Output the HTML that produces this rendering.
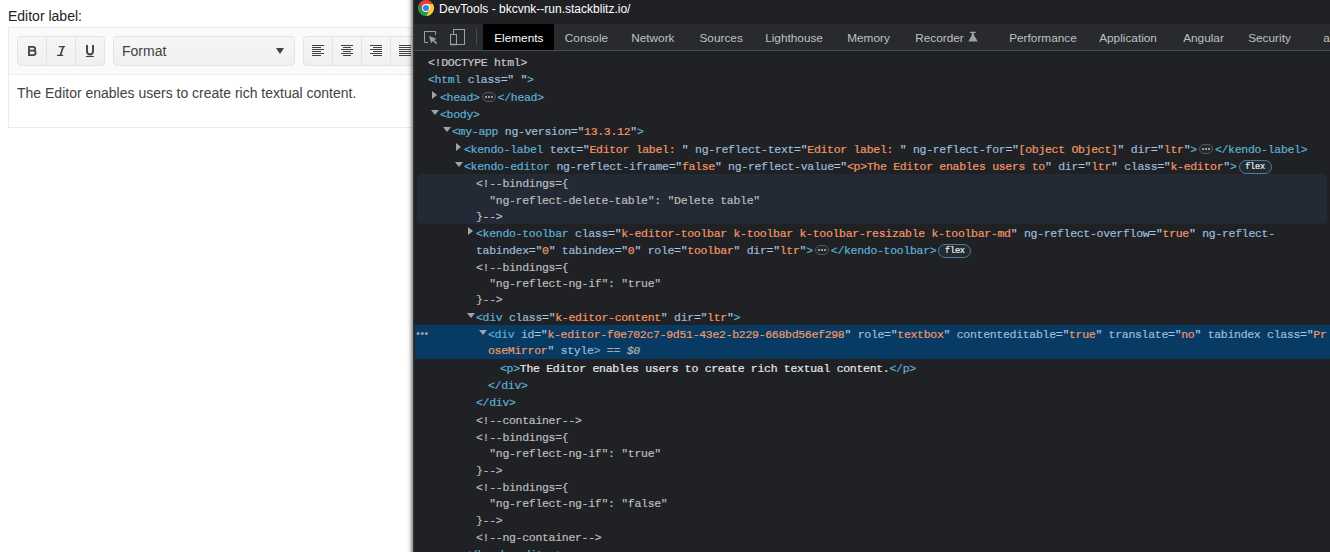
<!DOCTYPE html>
<html><head><meta charset="utf-8">
<style>
*{box-sizing:border-box}
html,body{margin:0;padding:0}
body{width:1330px;height:552px;overflow:hidden;position:relative;background:#fff;font-family:"Liberation Sans",sans-serif}
.lbl{position:absolute;left:8px;top:6px;font-size:14px;line-height:20px;color:#222}
.ed{position:absolute;left:8px;top:27px;width:600px;height:101px;border:1px solid #ebebeb;background:#fff}
.tb{position:absolute;left:0;top:0;right:0;height:47px;background:#fafafa;border-bottom:1px solid #ebebeb}
.grp{position:absolute;top:8px;height:30px;border:1px solid #e3e3e3;border-radius:4px;background:linear-gradient(#f6f6f6,#f0f0f0)}
.sep{position:absolute;top:0;bottom:0;width:1px;background:#e3e3e3}
.gl{position:absolute;color:#424242}
.content{position:absolute;left:8px;top:55px;font-size:14px;line-height:20px;color:#424242;white-space:nowrap}
.dt{position:absolute;left:413px;top:0;width:917px;height:552px;background:#202124;border-left:1px solid #3a3a3a;overflow:hidden;font-family:"Liberation Sans",sans-serif}
.shadow{position:absolute;left:407px;top:0;width:6px;height:552px;background:linear-gradient(to right,rgba(0,0,0,0),rgba(0,0,0,.08) 40%,rgba(0,0,0,.45))}
.title{position:absolute;left:0;top:0;width:100%;height:24px;background:#202124}
.ttext{position:absolute;left:25px;top:2px;font-size:12px;line-height:14px;color:#fff;white-space:nowrap}
.tabs{position:absolute;left:0;top:24px;width:100%;height:27px;background:#292a2d;border-bottom:1px solid #494c50}
.tab{position:absolute;top:1px;height:26px;font-size:11.8px;line-height:26px;color:#bdc1c6;white-space:nowrap}
.tabsel{position:absolute;left:69px;top:0;width:71px;height:26px;background:#000}
.tree{position:absolute;left:0;top:0;width:100%;height:552px}
.r{position:absolute;white-space:pre;font-family:"Liberation Mono",monospace;font-size:11.5px;letter-spacing:-0.3px;line-height:16px;height:16px;-webkit-text-stroke:0.2px}
.t{color:#5db0d7}.a{color:#9bbbdc}.v{color:#f29766}.p{color:#a8c8e0}.c{color:#bdbdbd}.x{color:#e8e8e8}.d{color:#c8c8c8}.i{color:#a8acb0;font-style:italic}.q{color:#a8acb0}
.dots{display:inline-block;position:relative;width:14px;height:10px;border:1px solid #56585c;background:#26272a;border-radius:5px;margin:0 2px 0 2px;vertical-align:-1px;letter-spacing:0}
.dots b{position:absolute;top:3px;width:2px;height:2px;background:#9a9a9a}
.dots b:nth-child(1){left:2px}.dots b:nth-child(2){left:5px}.dots b:nth-child(3){left:8px}
.flex{display:inline-block;font-style:normal;font-family:"Liberation Mono",monospace;font-size:8.5px;letter-spacing:-0.2px;line-height:12px;height:14px;width:33px;text-align:center;border:1px solid #4b7d97;border-radius:7px;color:#f0f0f0;background:#222b33;margin-left:2px;vertical-align:1px}
.ar{position:absolute;width:0;height:0;border-left:5.5px solid #a0a4a8;border-top:4px solid transparent;border-bottom:4px solid transparent}
.ad{position:absolute;width:0;height:0;border-top:5.5px solid #a0a4a8;border-left:4px solid transparent;border-right:4px solid transparent}
.hover{position:absolute;left:3px;top:174px;width:910px;height:50px;background:#242a35;border-radius:5px}
.sel{position:absolute;left:1px;top:325px;width:916px;height:34px;background:#073b63}
</style></head>
<body>
<div class="lbl">Editor label:</div>
<div class="ed">
  <div class="tb">
    <div class="grp" style="left:8px;width:88px">
      <div class="sep" style="left:28px"></div>
      <div class="sep" style="left:57px"></div>
      <svg style="position:absolute;left:0;top:0" width="86" height="28" viewBox="18 37 86 28" fill="none" stroke="#424242">
<path d="M29 46V56" stroke-width="1.8"/><path d="M29 46.9H33Q35.2 46.9 35.2 48.75Q35.2 50.6 33 50.6H29M29 50.6H33.4Q35.6 50.6 35.6 52.85Q35.6 55.1 33.4 55.1H29" stroke-width="1.8"/>
<path d="M58.8 46.6H65M57 55.4H63.2" stroke-width="1.2"/><path d="M60.3 55.4L63.3 46.6" stroke-width="1.7"/>
<path d="M87 45V51.3Q87 54.5 90 54.5Q93 54.5 93 51.3V45" stroke-width="1.9"/><path d="M86 56.5H94" stroke-width="1"/>
</svg>
      </div>
    <div class="grp" style="left:104px;width:182px">
      <div class="gl" style="left:8px;top:4px;font-size:14px;line-height:20px">Format</div>
      <div class="gl" style="left:162px;top:11px;width:0;height:0;border-top:6px solid #424242;border-left:4px solid transparent;border-right:4px solid transparent"></div>
    </div>
    <div class="grp" style="left:294px;width:146px">
      <div style="position:absolute;left:8px;top:8px;width:12px;height:1px;background:#424242"></div><div style="position:absolute;left:8px;top:10px;width:9px;height:1px;background:#424242"></div><div style="position:absolute;left:8px;top:12px;width:12px;height:1px;background:#424242"></div><div style="position:absolute;left:8px;top:14px;width:9px;height:1px;background:#424242"></div><div style="position:absolute;left:8px;top:16px;width:12px;height:1px;background:#424242"></div><div style="position:absolute;left:8px;top:18px;width:9px;height:1px;background:#424242"></div><div style="position:absolute;left:37px;top:8px;width:12px;height:1px;background:#424242"></div><div style="position:absolute;left:39px;top:10px;width:8px;height:1px;background:#424242"></div><div style="position:absolute;left:37px;top:12px;width:12px;height:1px;background:#424242"></div><div style="position:absolute;left:39px;top:14px;width:8px;height:1px;background:#424242"></div><div style="position:absolute;left:37px;top:16px;width:12px;height:1px;background:#424242"></div><div style="position:absolute;left:39px;top:18px;width:8px;height:1px;background:#424242"></div><div style="position:absolute;left:66px;top:8px;width:12px;height:1px;background:#424242"></div><div style="position:absolute;left:69px;top:10px;width:9px;height:1px;background:#424242"></div><div style="position:absolute;left:66px;top:12px;width:12px;height:1px;background:#424242"></div><div style="position:absolute;left:69px;top:14px;width:9px;height:1px;background:#424242"></div><div style="position:absolute;left:66px;top:16px;width:12px;height:1px;background:#424242"></div><div style="position:absolute;left:69px;top:18px;width:9px;height:1px;background:#424242"></div><div style="position:absolute;left:95px;top:8px;width:12px;height:1px;background:#424242"></div><div style="position:absolute;left:95px;top:10px;width:12px;height:1px;background:#424242"></div><div style="position:absolute;left:95px;top:12px;width:12px;height:1px;background:#424242"></div><div style="position:absolute;left:95px;top:14px;width:12px;height:1px;background:#424242"></div><div style="position:absolute;left:95px;top:16px;width:12px;height:1px;background:#424242"></div><div style="position:absolute;left:95px;top:18px;width:12px;height:1px;background:#424242"></div><div class="sep" style="left:28px"></div><div class="sep" style="left:57px"></div><div class="sep" style="left:86px"></div><div class="sep" style="left:115px"></div>
    </div>
  </div>
  <div class="content">The Editor enables users to create rich textual content.</div>
</div>
<div class="shadow"></div>
<div class="dt">
  <div class="title">
    <svg style="position:absolute;left:4px;top:0" width="16" height="16" viewBox="0 0 16 16">
<path d="M8 4L14.93 4A8 8 0 0 0 1.07 4L4.54 10L8 8Z" fill="#db4437"/>
<path d="M11.46 10L8 16A8 8 0 0 0 14.93 4L8 4L8 8Z" fill="#fcc934"/>
<path d="M4.54 10L1.07 4A8 8 0 0 0 8 16L11.46 10L8 8Z" fill="#1e9e4a"/>
<circle cx="8" cy="8" r="4" fill="#fff"/><circle cx="8" cy="8" r="3.1" fill="#3c7ff0"/></svg>
    <div class="ttext">DevTools - bkcvnk--run.stackblitz.io/</div>
  </div>
  <div class="tabs">
    <div class="tabsel"></div><svg style="position:absolute;left:10px;top:7px" width="14" height="14" viewBox="0 0 14 14" fill="none" stroke="#9aa0a6">
<path d="M4 11.5H0.5V0.5H11.5V4"/><path d="M5 5L12.6 7.8L9.4 9.3L7.2 12.2Z" fill="#9aa0a6" stroke="none"/><path d="M9 9L12.8 12.8" stroke-width="1.6"/></svg>
<svg style="position:absolute;left:36px;top:5px" width="16" height="17" viewBox="0 0 16 17" fill="none" stroke="#9aa0a6">
<rect x="3.5" y="0.5" width="11" height="15"/><rect x="0.5" y="5.5" width="6" height="10" fill="#292a2d"/><path d="M0 15.5H7" stroke-width="1.5"/></svg>
<div style="position:absolute;left:62px;top:5px;width:1px;height:16px;background:#4a4c50"></div><div class="tab" style="left:80.2px;color:#ffffff">Elements</div><div class="tab" style="left:150.8px;color:#bdc1c6">Console</div><div class="tab" style="left:217.2px;color:#bdc1c6">Network</div><div class="tab" style="left:285.5px;color:#bdc1c6">Sources</div><div class="tab" style="left:351.2px;color:#bdc1c6">Lighthouse</div><div class="tab" style="left:433.2px;color:#bdc1c6">Memory</div><div class="tab" style="left:501.2px;color:#bdc1c6">Recorder</div><div class="tab" style="left:595.2px;color:#bdc1c6">Performance</div><div class="tab" style="left:685.2px;color:#bdc1c6">Application</div><div class="tab" style="left:769.2px;color:#bdc1c6">Angular</div><div class="tab" style="left:834.2px;color:#bdc1c6">Security</div><div class="tab" style="left:909.2px;color:#bdc1c6">a</div><svg style="position:absolute;left:554px;top:7px" width="11" height="11" viewBox="0 0 11 11"><path d="M2 0.7H7.8V1.9H5.9V4L9.8 10.5H0.4L3.8 4V1.9H2Z" fill="#9aa0a6"/></svg>
  </div>
  <div class="tree">
    <div class="hover"></div>
    <div class="sel"></div>
    <svg style="position:absolute;left:0;top:328px" width="20" height="12" viewBox="414 328 20 12" fill="#a0a0a0"><circle cx="418.1" cy="333.6" r="1.5"/><circle cx="422.3" cy="333.6" r="1.5"/><circle cx="426.4" cy="333.6" r="1.5"/></svg>
<div class="r" style="left:14px;top:55px"><span class="d">&lt;!DOCTYPE html&gt;</span></div>
<div class="r" style="left:14px;top:72px"><span class="t">&lt;html</span><span class="p"> </span><span class="a">class</span><span class="p">="</span><span class="v"> </span><span class="p">"</span><span class="t">&gt;</span></div>
<s class="ar" style="left:18px;top:91px"></s><div class="r" style="left:26px;top:90px"><span class="t">&lt;head&gt;</span><i class="dots"><b></b><b></b><b></b></i><span class="t">&lt;/head&gt;</span></div>
<s class="ad" style="left:16.5px;top:110px"></s><div class="r" style="left:26px;top:107px"><span class="t">&lt;body&gt;</span></div>
<s class="ad" style="left:28.5px;top:127px"></s><div class="r" style="left:38px;top:124px"><span class="t">&lt;my-app</span><span class="p"> </span><span class="a">ng-version</span><span class="p">="</span><span class="v">13.3.12</span><span class="p">"</span><span class="t">&gt;</span></div>
<s class="ar" style="left:42px;top:143px"></s><div class="r" style="left:50px;top:142px"><span class="t">&lt;kendo-label</span><span class="p"> </span><span class="a">text</span><span class="p">="</span><span class="v">Editor label: </span><span class="p">"</span><span class="p"> </span><span class="a">ng-reflect-text</span><span class="p">="</span><span class="v">Editor label: </span><span class="p">"</span><span class="p"> </span><span class="a">ng-reflect-for</span><span class="p">="</span><span class="v">[object Object]</span><span class="p">"</span><span class="p"> </span><span class="a">dir</span><span class="p">="</span><span class="v">ltr</span><span class="p">"</span><span class="t">&gt;</span><i class="dots"><b></b><b></b><b></b></i><span class="t">&lt;/kendo-label&gt;</span></div>
<s class="ad" style="left:40.5px;top:162px"></s><div class="r" style="left:50px;top:159px"><span class="t">&lt;kendo-editor</span><span class="p"> </span><span class="a">ng-reflect-iframe</span><span class="p">="</span><span class="v">false</span><span class="p">"</span><span class="p"> </span><span class="a">ng-reflect-value</span><span class="p">="</span><span class="v">&lt;p&gt;The Editor enables users to</span><span class="p">"</span><span class="p"> </span><span class="a">dir</span><span class="p">="</span><span class="v">ltr</span><span class="p">"</span><span class="p"> </span><span class="a">class</span><span class="p">="</span><span class="v">k-editor</span><span class="p">"</span><span class="t">&gt;</span><i class="flex">flex</i></div>
<div class="r" style="left:62px;top:176px"><span class="c">&lt;!--bindings={</span></div>
<div class="r" style="left:62px;top:193px"><span class="c">  "ng-reflect-delete-table": "Delete table"</span></div>
<div class="r" style="left:62px;top:209px"><span class="c">}--&gt;</span></div>
<s class="ar" style="left:54px;top:227px"></s><div class="r" style="left:62px;top:226px"><span class="t">&lt;kendo-toolbar</span><span class="p"> </span><span class="a">class</span><span class="p">="</span><span class="v">k-editor-toolbar k-toolbar k-toolbar-resizable k-toolbar-md</span><span class="p">"</span><span class="p"> </span><span class="a">ng-reflect-overflow</span><span class="p">="</span><span class="v">true</span><span class="p">"</span><span class="p"> </span><span class="a">ng-reflect-</span></div>
<div class="r" style="left:62px;top:243px"><span class="a">tabindex</span><span class="p">="</span><span class="v">0</span><span class="p">"</span><span class="p"> </span><span class="a">tabindex</span><span class="p">="</span><span class="v">0</span><span class="p">"</span><span class="p"> </span><span class="a">role</span><span class="p">="</span><span class="v">toolbar</span><span class="p">"</span><span class="p"> </span><span class="a">dir</span><span class="p">="</span><span class="v">ltr</span><span class="p">"</span><span class="t">&gt;</span><i class="dots"><b></b><b></b><b></b></i><span class="t">&lt;/kendo-toolbar&gt;</span><i class="flex">flex</i></div>
<div class="r" style="left:62px;top:260px"><span class="c">&lt;!--bindings={</span></div>
<div class="r" style="left:62px;top:276px"><span class="c">  "ng-reflect-ng-if": "true"</span></div>
<div class="r" style="left:62px;top:292px"><span class="c">}--&gt;</span></div>
<s class="ad" style="left:52.5px;top:313px"></s><div class="r" style="left:62px;top:310px"><span class="t">&lt;div</span><span class="p"> </span><span class="a">class</span><span class="p">="</span><span class="v">k-editor-content</span><span class="p">"</span><span class="p"> </span><span class="a">dir</span><span class="p">="</span><span class="v">ltr</span><span class="p">"</span><span class="t">&gt;</span></div>
<s class="ad" style="left:64.5px;top:330px"></s><div class="r" style="left:74px;top:327px"><span class="t">&lt;div</span><span class="p"> </span><span class="a">id</span><span class="p">="</span><span class="v">k-editor-f0e702c7-9d51-43e2-b229-668bd56ef298</span><span class="p">"</span><span class="p"> </span><span class="a">role</span><span class="p">="</span><span class="v">textbox</span><span class="p">"</span><span class="p"> </span><span class="a">contenteditable</span><span class="p">="</span><span class="v">true</span><span class="p">"</span><span class="p"> </span><span class="a">translate</span><span class="p">="</span><span class="v">no</span><span class="p">"</span><span class="p"> </span><span class="a">tabindex</span><span class="p"> </span><span class="a">class</span><span class="p">="</span><span class="v">Pr</span></div>
<div class="r" style="left:74px;top:343px"><span class="v">oseMirror</span><span class="p">"</span><span class="p"> </span><span class="a">style</span><span class="t">&gt;</span><span class="q"> == </span><span class="i">$0</span></div>
<div class="r" style="left:86px;top:361px"><span class="t">&lt;p&gt;</span><span class="x">The Editor enables users to create rich textual content.</span><span class="t">&lt;/p&gt;</span></div>
<div class="r" style="left:74px;top:378px"><span class="t">&lt;/div&gt;</span></div>
<div class="r" style="left:62px;top:395px"><span class="t">&lt;/div&gt;</span></div>
<div class="r" style="left:62px;top:413px"><span class="c">&lt;!--container--&gt;</span></div>
<div class="r" style="left:62px;top:430px"><span class="c">&lt;!--bindings={</span></div>
<div class="r" style="left:62px;top:446px"><span class="c">  "ng-reflect-ng-if": "true"</span></div>
<div class="r" style="left:62px;top:463px"><span class="c">}--&gt;</span></div>
<div class="r" style="left:62px;top:480px"><span class="c">&lt;!--bindings={</span></div>
<div class="r" style="left:62px;top:496px"><span class="c">  "ng-reflect-ng-if": "false"</span></div>
<div class="r" style="left:62px;top:513px"><span class="c">}--&gt;</span></div>
<div class="r" style="left:62px;top:530px"><span class="c">&lt;!--ng-container--&gt;</span></div>
<div class="r" style="left:50px;top:547px"><span class="t">&lt;/kendo-editor&gt;</span></div>
  </div>
</div>
</body></html>
